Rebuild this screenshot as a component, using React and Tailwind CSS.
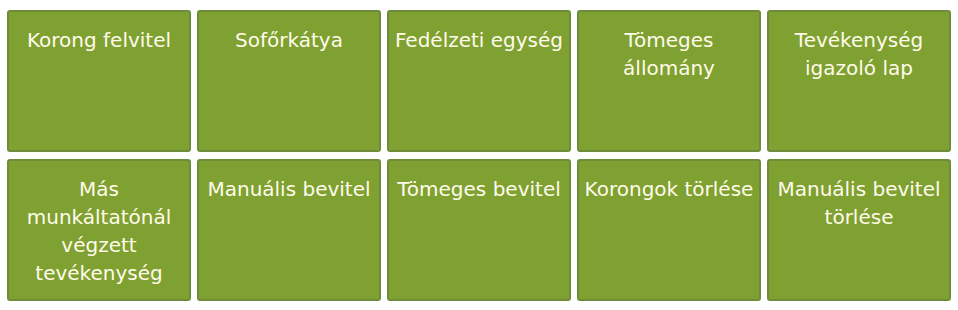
const tiles = [
  'Korong felvitel',
  'Sofőrkátya',
  'Fedélzeti egység',
  'Tömeges állomány',
  'Tevékenység igazoló lap',
  'Más munkáltatónál végzett tevékenység',
  'Manuális bevitel',
  'Tömeges bevitel',
  'Korongok törlése',
  'Manuális bevitel törlése',
];

export default function App() {
  return (
    <div className="min-h-screen bg-white pl-[7px] pt-[10px]">
      <div className="grid grid-cols-[repeat(5,184px)] gap-x-[6px] gap-y-[7px]">
        {tiles.map((t) => (
          <button
            key={t}
            className="h-[142px] rounded-[3px] border-2 border-[#6f8c3a] bg-[#7fa131] px-1 pt-[14px] text-center text-[20px] leading-[28px] text-[#fffbea] flex justify-center items-start"
            style={{ fontFamily: '"DejaVu Sans", Tahoma, sans-serif' }}
          >
            <span>{t}</span>
          </button>
        ))}
      </div>
    </div>
  );
}
